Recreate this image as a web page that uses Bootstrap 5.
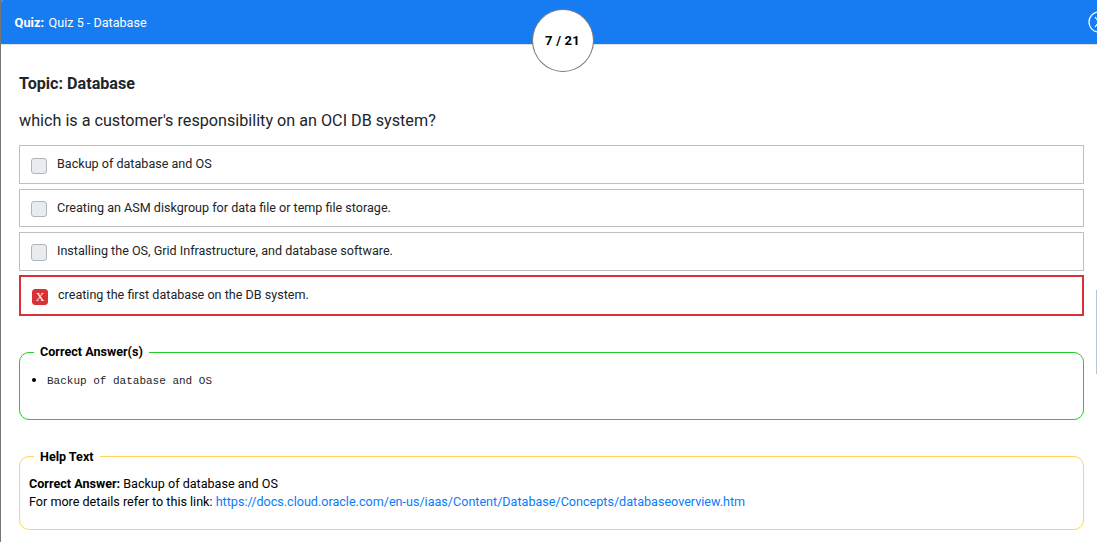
<!DOCTYPE html>
<html lang="en">
<head>
<meta charset="utf-8">
<meta name="viewport" content="width=device-width, initial-scale=1">
<title>Quiz 5 - Database</title>
<link rel="stylesheet" href="https://cdn.jsdelivr.net/npm/bootstrap@5.3.0/dist/css/bootstrap.min.css">
<style>
  body { font-family: Roboto, "Liberation Sans", sans-serif; font-size: 12.59px; line-height: 18px; color: #212529; overflow: hidden; background: #777; }
  .quiz-window { margin-left: 1px; height: 542px; background: #fff; border-top-left-radius: 3px; overflow: hidden; }
  .quiz-bar { height: 45px; background: #177bf1; background-clip: padding-box; padding: 1px 0 0 13.6px; font-size: 12.6px; }
  .quiz-bar strong { font-size: 12.8px; margin-right: 1.4px; }
  .quiz-rule { border-bottom: 1px solid #dee2e6; }
  .counter { width: 62px; height: 63px; left: 531px; top: 9px; border: 1px solid #777; font-size: 13px; color: #000; letter-spacing: .2px; padding-right: 1px; }
  .close-ring { right: -13px; top: 11px; }
  .quiz-body { padding: 29px 13px 0 18px; }
  .topic { font-size: 16.15px; line-height: 20px; margin-bottom: 16px; }
  .question { font-size: 16.18px; line-height: 22px; margin-bottom: 13px; }
  .option { height: 38px; border: 1px solid #bfbfbf; padding: 9px 11px 0; gap: 10px; }
  .option.tall { height: 39px; }
  .option.wrong { height: 41px; border: 2px solid #d93236; }
  .tick { width: 16px; height: 16px; margin-top: 2px; border: 1px solid #adb5bd; border-radius: 3px; background: #e9ecef; }
  .third .tick { height: 17px; }
  .first .tick, .wrong .tick { margin-top: 3px; }
  .wrong .tick { background: #d93236; border-color: #d93236; color: #fff; font: 12px/14px "Liberation Serif", serif; }
  .panel { border: 1px solid #22cc2b; border-radius: 10px; height: 68px; }
  .panel.help { border-color: #ffd65a; height: 74px; }
  .panel-title { left: 14px; top: -10px; padding: 0 6px; background: #fff; color: #000; }
  .help .panel-title { top: -9px; }
  .answers { padding: 18px 0 0 27px; font: 11px/18px "Liberation Mono", monospace; }
  .answers li::marker { color: #000; font-size: 14px; }
  .help-copy { padding: 18px 9px 0; color: #000; }
  .help-copy a { color: #077bf8; }
  .scroll-thumb { right: 0; top: 290px; width: 1px; height: 84px; background: #b5c7dd; }
</style>
</head>
<body>
<main class="quiz-window position-relative">
  <header class="quiz-bar quiz-rule d-flex align-items-center text-white">
    <div><strong>Quiz:</strong> Quiz 5 - Database</div>
  </header>
  <div class="counter position-absolute rounded-circle bg-white d-flex align-items-center justify-content-center fw-bold">7 / 21</div>
  <svg class="close-ring position-absolute" width="22" height="22" viewBox="0 0 22 22" fill="none" stroke="#fff" stroke-width="1.2"><circle cx="11" cy="11" r="10"/><path d="M7 6l8 10M15 6l-8 10"/></svg>
  <div class="quiz-body">
    <h1 class="topic fw-bold">Topic: Database</h1>
    <p class="question">which is a customer's responsibility on an OCI DB system?</p>
    <div class="option tall first d-flex align-items-start" style="margin-bottom:5px"><span class="tick"></span><span>Backup of database and OS</span></div>
    <div class="option d-flex align-items-start" style="margin-bottom:5px"><span class="tick"></span><span>Creating an ASM diskgroup for data file or temp file storage.</span></div>
    <div class="option tall third d-flex align-items-start" style="margin-bottom:4px"><span class="tick"></span><span>Installing the OS, Grid Infrastructure, and database software.</span></div>
    <div class="option wrong d-flex align-items-start"><span class="tick text-center">X</span><span>creating the first database on the DB system.</span></div>
    <section class="panel position-relative" style="margin-top:36px">
      <strong class="panel-title position-absolute">Correct Answer(s)</strong>
      <ul class="answers mb-0"><li>Backup of database and OS</li></ul>
    </section>
    <section class="panel help position-relative" style="margin-top:36px">
      <strong class="panel-title position-absolute">Help Text</strong>
      <div class="help-copy"><strong>Correct Answer:</strong> Backup of database and OS<br>For more details refer to this link: <a class="text-decoration-none" href="#">https://docs.cloud.oracle.com/en-us/iaas/Content/Database/Concepts/databaseoverview.htm</a></div>
    </section>
  </div>
  <div class="scroll-thumb position-absolute"></div>
</main>
<script src="https://cdn.jsdelivr.net/npm/bootstrap@5.3.0/dist/js/bootstrap.bundle.min.js"></script>
</body>
</html>
